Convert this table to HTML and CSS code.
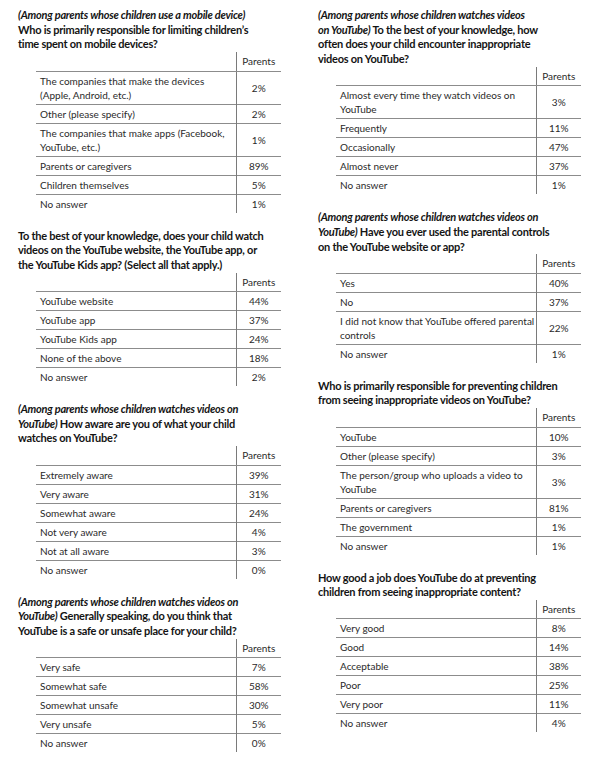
FILE: index.html
```html
<!DOCTYPE html>
<html lang="en">
<head>
<meta charset="utf-8">
<title>Parents survey</title>
<link rel="stylesheet" href="styles.css">
</head>
<body>
<div class="page">
  <div class="col">
    <section class="q">
      <h2><em>(Among parents whose children use a mobile device)</em><br>Who is primarily responsible for limiting children’s<br>time spent on mobile devices?</h2>
      <table>
        <thead><tr><th></th><th class="v">Parents</th></tr></thead>
        <tbody>
          <tr><td>The companies that make the devices<br>(Apple, Android, etc.)</td><td class="v">2%</td></tr>
          <tr><td>Other (please specify)</td><td class="v">2%</td></tr>
          <tr><td>The companies that make apps (Facebook,<br>YouTube, etc.)</td><td class="v">1%</td></tr>
          <tr><td>Parents or caregivers</td><td class="v">89%</td></tr>
          <tr><td>Children themselves</td><td class="v">5%</td></tr>
          <tr><td>No answer</td><td class="v">1%</td></tr>
        </tbody>
      </table>
    </section>
    <section class="q">
      <h2>To the best of your knowledge, does your child watch<br>videos on the YouTube website, the YouTube app, or<br>the YouTube Kids app? (Select all that apply.)</h2>
      <table>
        <thead><tr><th></th><th class="v">Parents</th></tr></thead>
        <tbody>
          <tr><td>YouTube website</td><td class="v">44%</td></tr>
          <tr><td>YouTube app</td><td class="v">37%</td></tr>
          <tr><td>YouTube Kids app</td><td class="v">24%</td></tr>
          <tr><td>None of the above</td><td class="v">18%</td></tr>
          <tr><td>No answer</td><td class="v">2%</td></tr>
        </tbody>
      </table>
    </section>
    <section class="q">
      <h2><em>(Among parents whose children watches videos on<br>YouTube)</em> How aware are you of what your child<br>watches on YouTube?</h2>
      <table>
        <thead><tr><th></th><th class="v">Parents</th></tr></thead>
        <tbody>
          <tr><td>Extremely aware</td><td class="v">39%</td></tr>
          <tr><td>Very aware</td><td class="v">31%</td></tr>
          <tr><td>Somewhat aware</td><td class="v">24%</td></tr>
          <tr><td>Not very aware</td><td class="v">4%</td></tr>
          <tr><td>Not at all aware</td><td class="v">3%</td></tr>
          <tr><td>No answer</td><td class="v">0%</td></tr>
        </tbody>
      </table>
    </section>
    <section class="q">
      <h2><em>(Among parents whose children watches videos on<br>YouTube)</em> Generally speaking, do you think that<br>YouTube is a safe or unsafe place for your child?</h2>
      <table>
        <thead><tr><th></th><th class="v">Parents</th></tr></thead>
        <tbody>
          <tr><td>Very safe</td><td class="v">7%</td></tr>
          <tr><td>Somewhat safe</td><td class="v">58%</td></tr>
          <tr><td>Somewhat unsafe</td><td class="v">30%</td></tr>
          <tr><td>Very unsafe</td><td class="v">5%</td></tr>
          <tr><td>No answer</td><td class="v">0%</td></tr>
        </tbody>
      </table>
    </section>
  </div>
  <div class="col">
    <section class="q">
      <h2><em>(Among parents whose children watches videos<br>on YouTube)</em> To the best of your knowledge, how<br>often does your child encounter inappropriate<br>videos on YouTube?</h2>
      <table>
        <thead><tr><th></th><th class="v">Parents</th></tr></thead>
        <tbody>
          <tr><td>Almost every time they watch videos on<br>YouTube</td><td class="v">3%</td></tr>
          <tr><td>Frequently</td><td class="v">11%</td></tr>
          <tr><td>Occasionally</td><td class="v">47%</td></tr>
          <tr><td>Almost never</td><td class="v">37%</td></tr>
          <tr><td>No answer</td><td class="v">1%</td></tr>
        </tbody>
      </table>
    </section>
    <section class="q">
      <h2><em>(Among parents whose children watches videos on<br>YouTube)</em> Have you ever used the parental controls<br>on the YouTube website or app?</h2>
      <table>
        <thead><tr><th></th><th class="v">Parents</th></tr></thead>
        <tbody>
          <tr><td>Yes</td><td class="v">40%</td></tr>
          <tr><td>No</td><td class="v">37%</td></tr>
          <tr><td>I did not know that YouTube offered parental<br>controls</td><td class="v">22%</td></tr>
          <tr><td>No answer</td><td class="v">1%</td></tr>
        </tbody>
      </table>
    </section>
    <section class="q">
      <h2>Who is primarily responsible for preventing children<br>from seeing inappropriate videos on YouTube?</h2>
      <table>
        <thead><tr><th></th><th class="v">Parents</th></tr></thead>
        <tbody>
          <tr><td>YouTube</td><td class="v">10%</td></tr>
          <tr><td>Other (please specify)</td><td class="v">3%</td></tr>
          <tr><td>The person/group who uploads a video to<br>YouTube</td><td class="v">3%</td></tr>
          <tr><td>Parents or caregivers</td><td class="v">81%</td></tr>
          <tr><td>The government</td><td class="v">1%</td></tr>
          <tr><td>No answer</td><td class="v">1%</td></tr>
        </tbody>
      </table>
    </section>
    <section class="q">
      <h2>How good a job does YouTube do at preventing<br>children from seeing inappropriate content?</h2>
      <table>
        <thead><tr><th></th><th class="v">Parents</th></tr></thead>
        <tbody>
          <tr><td>Very good</td><td class="v">8%</td></tr>
          <tr><td>Good</td><td class="v">14%</td></tr>
          <tr><td>Acceptable</td><td class="v">38%</td></tr>
          <tr><td>Poor</td><td class="v">25%</td></tr>
          <tr><td>Very poor</td><td class="v">11%</td></tr>
          <tr><td>No answer</td><td class="v">4%</td></tr>
        </tbody>
      </table>
    </section>
  </div>
</div>
</body>
</html>
```

FILE: styles.css
```css
* { box-sizing: border-box; }

html, body {
  margin: 0;
  padding: 0;
  background: #ffffff;
}

body {
  font-family: Lato, "Open Sans", "Liberation Sans", sans-serif;
  color: #2b2b2b;
}

.page {
  display: grid;
  grid-template-columns: 300px 300px;
  padding: 8px 0 0 18px;
}

.col {
  display: flex;
  flex-direction: column;
  gap: 16px;
}

.q h2 {
  margin: 0;
  font-size: 11px;
  line-height: 14.67px;
  font-weight: 700;
  letter-spacing: -0.25px;
  color: #141414;
  white-space: nowrap;
}

.q h2 em {
  font-style: italic;
}

.q table {
  margin-left: 18px;
  width: 245px;
  border-collapse: collapse;
  table-layout: fixed;
}

.q th,
.q td {
  padding: 2px 4px;
  font-size: 10px;
  line-height: 14px;
  font-weight: 400;
  text-align: left;
  vertical-align: middle;
  color: #2a2a2a;
  white-space: nowrap;
}

.q th {
  height: 19px;
  border-bottom: 1px solid #8c8c8c;
}

.q th.v,
.q td.v {
  width: 45px;
  text-align: center;
  border-left: 1px solid #7a7a7a;
  padding: 2px 0;
}

.q tbody tr + tr td {
  border-top: 1px solid #8c8c8c;
}
```
